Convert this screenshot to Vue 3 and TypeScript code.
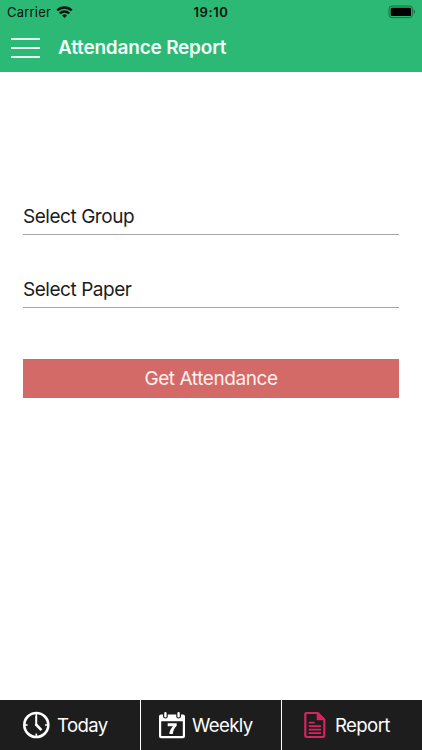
<script setup lang="ts">
import { ref } from 'vue'

type Tab = 'today' | 'weekly' | 'report'

const fields = ['Select Group', 'Select Paper']
const tabs: { id: Tab; label: string }[] = [
  { id: 'today', label: 'Today' },
  { id: 'weekly', label: 'Weekly' },
  { id: 'report', label: 'Report' },
]
const active = ref<Tab>('report')
</script>

<template>
  <div class="screen">
    <header class="header">
      <div class="status">
        <div class="carrier">
          <span class="carrier-name">Carrier</span>
          <svg class="wifi" width="17" height="12" viewBox="0 0 16 12">
            <g fill="none" stroke="#06150d" stroke-width="2.4">
              <path d="M.8 4.5a10.3 10.3 0 0 1 14.4 0" />
              <path d="M3.3 7.5a6.7 6.7 0 0 1 9.4 0" />
            </g>
            <path d="M8 12 5.5 9.5a3.6 3.6 0 0 1 5 0Z" fill="#06150d" />
          </svg>
        </div>
        <span class="time">19:10</span>
        <svg class="battery" width="28" height="14" viewBox="0 0 28 14">
          <rect x="1" y="1" width="23.6" height="11.6" rx="3" fill="none" stroke="#15713f" stroke-width="1" />
          <rect x="2.7" y="2.7" width="20.4" height="8.4" rx="1.2" fill="#000" />
          <path d="M25.8 4.8c1.8.7 1.8 3.3 0 4Z" fill="#15713f" />
        </svg>
      </div>
      <div class="bar">
        <button class="menu" aria-label="Menu"><i /><i /><i /></button>
        <h1>Attendance Report</h1>
      </div>
    </header>

    <main class="form">
      <div v-for="f in fields" :key="f" class="field"><span>{{ f }}</span></div>
      <button class="submit"><span>Get Attendance</span></button>
    </main>

    <nav class="tabs">
      <button v-for="t in tabs" :key="t.id" class="tab" :class="t.id" @click="active = t.id">
        <svg v-if="t.id === 'today'" width="28" height="28" viewBox="0 0 28 28">
          <g fill="none" stroke="#fff">
            <circle cx="14.3" cy="14" r="12" stroke-width="2.6" />
            <path d="M14.3 2v3.4M14.3 22.6V26M2 14h3.6M23 14h3.6" stroke-width="1.5" />
            <path d="M14.2 5v9.2" stroke-width="2" />
            <path d="m13.6 13 5.8 6.2" stroke-width="2.6" />
          </g>
        </svg>
        <svg v-else-if="t.id === 'weekly'" width="28" height="28" viewBox="0 0 28 28">
          <path
            fill="#fff"
            fill-rule="evenodd"
            d="M3 3.4h2v1.8a2.4 2.4 0 0 0 4.8 0V3.4h8.4v1.8a2.4 2.4 0 0 0 4.8 0V3.4h2q2 0 2 2v19.8q0 2-2 2H3q-2 0-2-2V5.4q0-2 2-2Zm.2 6.9v13.9q0 .9.9.9h19.8q.9 0 .9-.9V10.3Z"
          />
          <path d="M7.4 2.2v3M20.6 2.2v3" stroke="#fff" stroke-width="2.4" stroke-linecap="round" />
          <path d="M9.7 12.3h9v2.5c-2.3 2.3-3.6 5-3.9 8.2h-3.5c.3-3.1 1.6-5.7 3.7-7.8H9.7Z" fill="#fff" />
        </svg>
        <svg v-else width="22" height="28" viewBox="0 0 22 28">
          <path
            d="M13.3 2H2.5Q1.3 2 1.3 3.2v21.6q0 1.2 1.2 1.2h16.6q1.2 0 1.2-1.2V8.8Z"
            fill="none"
            stroke="#d5245f"
            stroke-width="2.2"
            stroke-linejoin="round"
          />
          <path d="M12.7 1.2v8h8.4V8L14.3 1Z" fill="#d5245f" />
          <path d="M4.7 11.7h6M4.7 15.2h12.4M4.7 18.7h12.4M4.7 22.2h12.4" stroke="#d5245f" stroke-width="1.8" />
        </svg>
        <span class="label">{{ t.label }}</span>
      </button>
    </nav>
  </div>
</template>

<style>
body {
  margin: 0;
}
</style>

<style scoped>
.screen {
  width: 422px;
  height: 750px;
  display: flex;
  flex-direction: column;
  overflow: hidden;
  background: #fff;
  font-family: Inter, "Liberation Sans", sans-serif;
}
button {
  border: 0;
  padding: 0;
  margin: 0;
  background: none;
  font: inherit;
}
svg {
  display: block;
  flex: none;
}
.header {
  height: 72px;
  flex: none;
  background: #2bb975;
}
.status {
  height: 24px;
  display: grid;
  grid-template-columns: 1fr auto 1fr;
  align-items: center;
  color: #06150d;
}
.carrier {
  display: flex;
  align-items: center;
  gap: 5px;
  padding-left: 7px;
}
.carrier-name {
  font-size: 13px;
  line-height: 24px;
  letter-spacing: 0.2px;
}
.time {
  font-size: 13px;
  font-weight: 600;
  line-height: 24px;
  letter-spacing: 0.6px;
}
.battery {
  justify-self: end;
  margin: 0 6px 1px 0;
}
.bar {
  height: 48px;
  display: flex;
  align-items: center;
  padding-left: 11px;
  gap: 18px;
}
.menu {
  width: 29px;
  height: 20px;
  display: flex;
  flex-direction: column;
  justify-content: space-between;
}
.menu i {
  height: 2px;
  background: #e6fff2;
}
h1 {
  margin: 0;
  color: #f1fff8;
  font-size: 19px;
  font-weight: 600;
  line-height: 48px;
  letter-spacing: -0.2px;
  white-space: nowrap;
}
.form {
  flex: 1;
  padding: 126px 23px 0;
  display: flex;
  flex-direction: column;
}
.field {
  height: 36px;
  margin-bottom: 36px;
  border-bottom: 1px solid #a5a5a5;
  color: #1c1c1c;
  font-size: 19px;
  line-height: 37px;
  letter-spacing: -0.46px;
}
.submit {
  height: 39px;
  margin-top: 15px;
  background: #d46a68;
  color: #fff1f0;
  font-size: 19px;
  line-height: 40px;
  letter-spacing: -0.43px;
}
.tabs {
  height: 50px;
  flex: none;
  display: grid;
  grid-template-columns: 140px 140px 140px;
  gap: 1px;
  background: #fff;
}
.tab {
  display: flex;
  align-items: center;
  background: #1d1d1d;
  color: #fff;
  font-size: 18.6px;
  letter-spacing: -0.6px;
}
.today {
  padding-left: 22px;
  gap: 7px;
}
.weekly {
  padding-left: 17px;
  gap: 6px;
}
.report {
  padding-left: 22px;
  gap: 9px;
}
</style>
